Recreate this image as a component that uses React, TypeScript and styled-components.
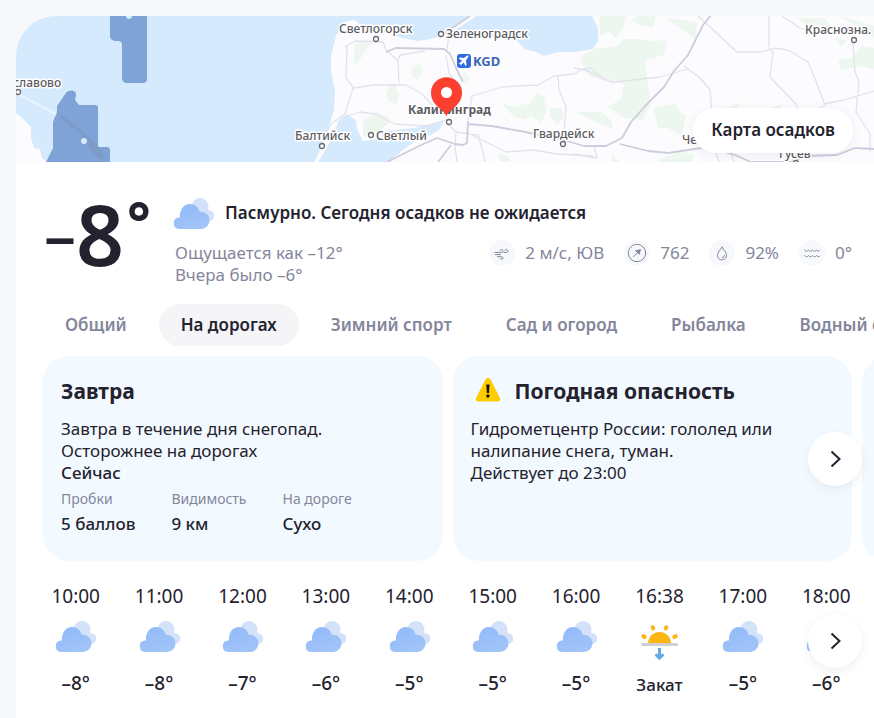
import React from "react";
import styled, { createGlobalStyle, css } from "styled-components";

const GlobalStyle = createGlobalStyle`
  * { box-sizing: border-box; }
  body {
    margin: 0;
    background: #f7f8fb;
    color: #25222f;
    font-family: "Noto Sans", "Open Sans", sans-serif;
    font-size: 17px;
    line-height: 22px;
    overflow-x: hidden;
  }
  h2, p, dl, dt, dd, ul, ol { margin: 0; padding: 0; list-style: none; }
  button { font: inherit; color: inherit; border: 0; cursor: pointer; }
`;

const Page = styled.div`
  display: flex;
  flex-direction: column;
  min-height: 100vh;
  padding: 16px 0 0 16px;
`;

const Card = styled.main`
  flex: 1;
  background: #fff;
  border-radius: 40px 0 0 0;
  overflow: hidden;
`;

const MapArea = styled.section`
  position: relative;
  height: 146px;
  background: #d5eafd;
`;

const MapDrawing = styled.svg`
  display: block;
  width: 100%;
  height: 100%;
  font-size: 12px;
  font-weight: 500;
`;

const MapButton = styled.button`
  position: absolute;
  right: 21px;
  bottom: 9px;
  padding: 11px 18px 12px;
  border-radius: 24px;
  background: #fff;
  font-weight: 600;
  box-shadow: 0 2px 10px rgba(40, 50, 90, 0.08);
`;

const Header = styled.header`
  display: flex;
  padding: 31px 22px 0 28px;
`;

const Temperature = styled.div`
  display: flex;
  align-items: center;
  flex: none;
  width: 129px;
  height: 82px;
  font-size: 84px;
  line-height: 82px;
  font-weight: 600;
`;

const Minus = styled.span`
  font-size: 64px;
  font-weight: 500;
`;

const Degree = styled.span`
  align-self: flex-start;
  margin-left: 3px;
  font-size: 56px;
  line-height: 56px;
  font-weight: 700;
`;

const Summary = styled.div`
  flex: 1;
  min-width: 0;
`;

const Condition = styled.div`
  display: flex;
  align-items: center;
  gap: 11px;
  height: 40px;
  font-weight: 600;
`;

const Details = styled.div`
  display: flex;
  justify-content: space-between;
  align-items: flex-start;
  margin-top: 7px;
  color: #84869c;
`;

const Feels = styled.p`
  padding: 2px 0 0 2px;
`;

const Metrics = styled.ul`
  display: flex;
  gap: 20px;
`;

const Metric = styled.li`
  display: flex;
  align-items: center;
  gap: 10px;
  height: 26px;
`;

const MetricIcon = styled.svg`
  width: 26px;
  height: 26px;
  border-radius: 50%;
  background: #f7f8fb;
  fill: none;
  stroke: #84869c;
  stroke-linecap: round;
  stroke-linejoin: round;
`;

const Tabs = styled.nav`
  display: flex;
  gap: 10px;
  margin-top: 18px;
  padding-left: 27px;
  overflow: hidden;
`;

const Tab = styled.button<{ $active?: boolean }>`
  flex: none;
  padding: 10px 22px;
  border-radius: 21px;
  background: transparent;
  color: #84869c;
  font-weight: 600;
  white-space: nowrap;
  ${(p) =>
    p.$active &&
    css`
      background: #f5f5f8;
      color: #25222f;
    `}
`;

const Carousel = styled.section`
  position: relative;
`;

const CardTrack = styled.div`
  display: flex;
  gap: 10px;
  margin-top: 10px;
  padding-left: 27px;
  overflow: hidden;
`;

const InfoCard = styled.article`
  flex: 0 0 calc(50% - 16px);
  min-height: 205px;
  padding: 21px 18px;
  border-radius: 26px;
  background: #f3faff;
`;

const CardTitle = styled.h2`
  display: flex;
  align-items: center;
  gap: 14px;
  margin-bottom: 13px;
  font-size: 21px;
  line-height: 28px;
  font-weight: 700;
`;

const WarningSlot = styled.svg`
  width: 26px;
  height: 28px;
  margin-left: 4px;
`;

const Now = styled.p`
  font-weight: 500;
`;

const Facts = styled.dl`
  display: flex;
  gap: 36px;
  margin-top: 5px;
`;

const FactName = styled.dt`
  color: #84869c;
  font-size: 14px;
  line-height: 20px;
`;

const FactValue = styled.dd`
  margin-top: 3px;
  line-height: 24px;
  font-weight: 500;
`;

const NextButton = styled.button`
  position: absolute;
  right: 12px;
  top: 50%;
  display: grid;
  place-items: center;
  width: 54px;
  height: 54px;
  margin-top: -27px;
  padding: 0;
  border-radius: 50%;
  background: #fff;
  box-shadow: 0 3px 10px rgba(40, 50, 90, 0.08);
`;

const Hours = styled.section`
  position: relative;
  margin-top: 20px;
  padding: 3px 6px 2px 18px;
`;

const HourList = styled.ol`
  display: grid;
  grid-template-columns: repeat(10, 1fr);
`;

const Hour = styled.li`
  display: flex;
  flex-direction: column;
  align-items: center;
  font-size: 19px;
  line-height: 24px;
`;

const HourIcon = styled.svg`
  width: 41px;
  height: 40px;
  margin: 12px 0 11px;
`;

const HourValue = styled.span<{ $event?: boolean }>`
  font-size: ${(p) => (p.$event ? 17 : 19)}px;
  line-height: ${(p) => (p.$event ? 28 : 24)}px;
  font-weight: 500;
`;

const CloudShape = () => (
  <>
    <g fill="#d3e2f8">
      <circle cx="27" cy="8.5" r="8.5" />
      <circle cx="36" cy="17.5" r="5.3" />
      <path d="M20 10h15l3 12-10 2z" />
    </g>
    <path
      d="M6 31a5.8 5.8 0 0 1-.3-11.5h1.2C6.5 12 10.500 6 17 6c4.800 0 8.800 3.200 9.700 7.900C32.300 13.500 36.500 17.200 36.500 22.300c0 5-4 8.700-8.900 8.700Z"
      fill="url(#cloudFill)"
    />
  </>
);

const Cloud = () => (
  <svg width="41" height="31" viewBox="0 0 41 31" aria-hidden="true">
    <defs>
      <linearGradient id="cloudFill" x1="0" y1="0" x2="0.4" y2="1">
        <stop offset="0" stopColor="#91bafa" />
        <stop offset="1" stopColor="#a0c3f8" />
      </linearGradient>
    </defs>
    <CloudShape />
  </svg>
);

const CloudHour = () => (
  <HourIcon viewBox="0 -1 41 40" aria-hidden="true">
    <CloudShape />
  </HourIcon>
);

const SunsetHour = () => (
  <HourIcon viewBox="0 0 41 40" aria-hidden="true">
    <path d="M9 23.500a11.500 11.500 0 0 1 23 0z" fill="#fbb515" />
    <g stroke="#fbb515" strokeWidth="4" strokeLinecap="round">
      <path d="M13.700 7.200l.5 1.200M27.300 7.200l-.5 1.200M4.300 16.200l1.400.8M36.700 16.200l-1.400.8" />
    </g>
    <path d="M3.500 24.500h34" stroke="#cfcfd4" strokeWidth="3" strokeLinecap="round" />
    <path d="M20.500 28v8" stroke="#62aae6" strokeWidth="3" />
    <path d="M17.500 35.200l3 3 3-3" fill="none" stroke="#62aae6" strokeWidth="3" strokeLinecap="round" strokeLinejoin="round" />
  </HourIcon>
);

const Chevron = () => (
  <svg width="24" height="24" viewBox="0 0 24 24" fill="none" stroke="#25222f" strokeWidth="2" aria-hidden="true">
    <path d="M8.500 4.500l8 7.500-8 7.500" />
  </svg>
);

const Warning = () => (
  <WarningSlot viewBox="0 0 26 28" aria-hidden="true">
    <path d="M10.500 2.500c1.200-2 4-2 5.100 0l9.200 18.200c1 2-.3 3.800-2.500 3.800H3.700c-2.200 0-3.500-1.800-2.500-3.800z" fill="#fc0" />
    <path d="M11.300 7.500h3.200l-.5 8.500h-2.200z" fill="#111" />
    <circle cx="12.900" cy="19" r="1.700" fill="#111" />
  </WarningSlot>
);

type Place = { name: string; x: number; y: number; dot: [number, number]; bold?: boolean };

const places: Place[] = [
  { name: "славово", x: 13, y: 87, dot: [18, 92] },
  { name: "Светлогорск", x: 339, y: 33, dot: [376, 39] },
  { name: "Зеленоградск", x: 446, y: 38, dot: [441, 34] },
  { name: "Калининград", x: 408, y: 114, dot: [449, 122], bold: true },
  { name: "Балтийск", x: 295, y: 140, dot: [322, 146] },
  { name: "Светлый", x: 376, y: 140, dot: [371, 135] },
  { name: "Гвардейск", x: 533, y: 138, dot: [563, 144] },
  { name: "Краснозна.", x: 805, y: 34, dot: [854, 40] },
  { name: "Че", x: 682, y: 144, dot: [712, 140] },
  { name: "Гусев", x: 779, y: 158, dot: [796, 163] },
];

const RegionMap = () => (
  <MapDrawing viewBox="16 16 858 146" preserveAspectRatio="xMinYMin slice" role="img" aria-label="Карта">
    <path
      fill="#fcfcff"
      d="M874 16H592l6 12 0 14-6 7-16 3-18 0-14 4-8-4-12-3-9-11-15-3-22 4-12-4-8 0-4-4 22-15-8 0-14 11-10 4-8 7-18 3-16-3-14-5-20-3-14-10-9 2-9 14-5 20 0 14 4 22 -1 18-6 20-8 20-8 17-4 9H874zM16 113l6 5 9 9 0 11 3 10 6 1 2 9 5 4H16z"
    />
    <path fill="#d5eafd" d="M339 120l8-5 9 5 1 9 6 12 16-2 9-8 26-3 21-5 10-3-6 10-9 5-16 7-11 8-15 12H318l8-13 7-13z" />
    <path fill="none" stroke="#eaf4fe" strokeWidth="2" d="M20 95l36 19" />
    <g fill="#eef7ef">
      <path d="M355 44l8-4h10l-7 10-10 16-3-4zM411 70l8-8 4 8-5 10-6-4zM386 92l8-10 5 12-2 11-9-4zM363 120l12-8 12 4 4 6-14 10-14 4zM501 103l16 5 8 12-12-4zM513 107l17-4 6-10 8 4 3 15-6 10-10-6-8 4zM550 108h11l3 8-6 9-8-8zM464 72l6 6-4 6-5-5zM498 154l10 2 3 6h-10z" />
      <path d="M600 16h26l-3 12-7 10-7-6-9 4-1-12zM630 20l8-4h18l-3 11-14-2zM665 18l20 2 12 3-1 17-8-6-14-10zM580 57l16-9h10l14-3 2-6 18 0 12 2 15-1-2 14-12 5-8 1 2 20 4 24-9 16-17-2-18-11 14-8 3-14-17-8-16 1-6-7zM574 112l16 0 11 0 10 8 2 9-12-5zM653 108l22-4 5 8 6 4-4 20-14-8-10 0zM724 108l15-5v8zM770 108l12-4-4 8zM797 18h28l6 8-16 6zM840 16l34 10v12zM835 37l12 4-6 6zM838 60l14-2 10-12 12 2v22l-14-4-20 4zM658 160l22-8 14 2-2 8h-34zM612 154l8 8h-8z" />
    </g>
    <g fill="none" stroke="#e2e2ec" strokeWidth="1.300" strokeLinejoin="round">
      <path d="M345 47l10-6 28 1 3 8 12 11 1 22M347 45l-1 33 8 10 20-3 32 0 15 8 13 14M398 61l2-6 25-4M353 88l-8 26-14 10-9 18M340 118l20-6 15 2 20 10 32 2 22-7M446 55l3 18 11 15M468 120l4-24 30-9 36-2 16-9 20-2 8-5 9-1 10 9 14 5 45-5 28-8M558 76l1 14 7 17-3 37M456 132l22 3 5 17 2 10M446 122l10 10-1 14 2 16M466 132l40 20 27-2 24 4 36 2M449 34l-2 16" />
      <path d="M698 16l39 36 24 0 14-4 13 2 20 12 9 22 8 21-9 5M769 16l0 32 4 4-3 25 25 26 6 10M684 66l16 12 10 12 2 24M782 16l18 12 10 4M824 104l20-4 30-9M853 42l2 30 4 10-3 30 14 22 0 18M574 68l14 3 14 8 12 4M594 146l3 12-23-4M715 150l4 12M730 150l4 12" />
    </g>
    <g fill="none" stroke="#cccddd" strokeWidth="1.800" strokeLinejoin="round">
      <path d="M386 52l10-4 48 1 6 5 7 16 6 12M445 33l25-17M387 162l32-16 18-8 18 6 8 1 4-2 1-22M468 124l24 2 28 5 40 8 24 7h22l16-8 9-16 17-19 16-16 10-16 14-16 15-30 13-16M438 162l13-17M620 144l28 7 20 2 33-5 16 2 18 5 16 7h40l16-6 30-1 18-7 19 1" />
    </g>
    <g fill="#7fa3d6">
      <path d="M110 16h37v63a4 4 0 0 1-4 4h-17a5 5 0 0 1-4-5V45a4 4 0 0 0-3-4h-4a5 5 0 0 1-5-5z" />
      <path d="M46 162l7-14V122l4-10v-6l9-13c3-4 11-3 10 3l-1 4 4 5h17a3 3 0 0 1 2 3v39h9a3 3 0 0 1 3 3v12z" />
    </g>
    <path fill="#7c9bc6" d="M60 114l14 10 16 14 12 12 3 8-5 2-6-6-5-8-10-14-9-6-10-8z" />
    <circle cx="84" cy="141" r="3" fill="#d5eafd" />
    <path d="M126 16h6a3 3 0 0 1-6 0z" fill="#d5eafd" />
    <g fill="#fff" stroke="#6a6a70" strokeWidth="1.300">
      {places.map((p) => (
        <circle key={p.name} cx={p.dot[0]} cy={p.dot[1]} r="2.500" />
      ))}
    </g>
    <g fill="#5c5c62" stroke="#fff" strokeWidth="3" strokeLinejoin="round" paintOrder="stroke">
      {places.map((p) => (
        <text key={p.name} x={p.x} y={p.y} fontWeight={p.bold ? 700 : 500}>
          {p.name}
        </text>
      ))}
    </g>
    <rect x="457" y="54" width="14" height="14" rx="3" fill="#2e6be0" />
    <path
      d="M460 57.500l3.800.5 3.200-2.300c1-.5 1.800.3 1.300 1.300L466 60.200l.5 5-1.200.8-1.500-3.600-2.400 2-.2 1.600-1-1.800-1.900-1 1.700-.2 2-2.400-3.200-1.800z"
      fill="#fff"
    />
    <text x="473" y="66" fontSize="13" fontWeight="700" fill="#3d68b3">
      KGD
    </text>
    <path d="M446.500 117c-1-8-15.500-10-15.500-24.300a15.500 15.500 0 0 1 31 0C462 107 447.500 109 446.500 117z" fill="#fc4030" />
    <circle cx="446.500" cy="92.500" r="5.500" fill="#fff" />
  </MapDrawing>
);

const metrics = [
  {
    value: "2 м/с, ЮВ",
    icon: <path d="M6 12.500h6.500a1.500 1.500 0 1 0-1.500-2M6.500 14.600h5M15 12.500h2.500a1.500 1.500 0 1 0-1.500-2M8.500 16.700h4.200a1.300 1.300 0 1 1-1.200 1.800" />,
  },
  {
    value: "762",
    icon: (
      <>
        <circle cx="13" cy="13" r="8.700" />
        <path d="M9.500 16.700l4-4" />
        <path d="M17 9l-1.500 6-4.500-4.500z" fill="#84869c" stroke="none" />
      </>
    ),
  },
  { value: "92%", icon: <path d="M13 7.200c2 2.900 4.500 5.600 4.500 8.200a4.500 4.500 0 0 1-9 0C8.500 12.800 11 10.100 13 7.200zM15.500 15.500a2.500 2.500 0 0 1-2 2.200" /> },
  {
    value: "0°",
    icon: (
      <path d="M5.500 10c1.300 1.700 3 1.700 4 0 1.300 1.700 3 1.700 4 0 1.300 1.700 3 1.700 4 0 1 1.200 2 1.500 3 .8M5.500 15.500c1.300 1.700 3 1.700 4 0 1.300 1.700 3 1.700 4 0 1.300 1.700 3 1.700 4 0 1 1.200 2 1.500 3 .8" />
    ),
  },
];

const tabs = ["Общий", "На дорогах", "Зимний спорт", "Сад и огород", "Рыбалка", "Водный спорт"];

const facts = [
  ["Пробки", "5 баллов"],
  ["Видимость", "9 км"],
  ["На дороге", "Сухо"],
];

const hours = [
  ["10:00", "–8°"],
  ["11:00", "–8°"],
  ["12:00", "–7°"],
  ["13:00", "–6°"],
  ["14:00", "–5°"],
  ["15:00", "–5°"],
  ["16:00", "–5°"],
  ["16:38", "Закат"],
  ["17:00", "–5°"],
  ["18:00", "–6°"],
];

export default function App() {
  return (
    <Page>
      <GlobalStyle />
      <Card>
        <MapArea>
          <RegionMap />
          <MapButton>Карта осадков</MapButton>
        </MapArea>
        <Header>
          <Temperature>
            <Minus>–</Minus>
            <span>8</span>
            <Degree>°</Degree>
          </Temperature>
          <Summary>
            <Condition>
              <Cloud />
              <span>Пасмурно. Сегодня осадков не ожидается</span>
            </Condition>
            <Details>
              <Feels>
                Ощущается как –12°
                <br />
                Вчера было –6°
              </Feels>
              <Metrics>
                {metrics.map((m) => (
                  <Metric key={m.value}>
                    <MetricIcon viewBox="0 0 26 26" aria-hidden="true">
                      {m.icon}
                    </MetricIcon>
                    <span>{m.value}</span>
                  </Metric>
                ))}
              </Metrics>
            </Details>
          </Summary>
        </Header>
        <Tabs>
          {tabs.map((t) => (
            <Tab key={t} $active={t === "На дорогах"}>
              {t}
            </Tab>
          ))}
        </Tabs>
        <Carousel>
          <CardTrack>
            <InfoCard>
              <CardTitle>Завтра</CardTitle>
              <p>
                Завтра в течение дня снегопад.
                <br />
                Осторожнее на дорогах
              </p>
              <Now>Сейчас</Now>
              <Facts>
                {facts.map(([name, value]) => (
                  <div key={name}>
                    <FactName>{name}</FactName>
                    <FactValue>{value}</FactValue>
                  </div>
                ))}
              </Facts>
            </InfoCard>
            <InfoCard>
              <CardTitle>
                <Warning />
                Погодная опасность
              </CardTitle>
              <p>
                Гидрометцентр России: гололед или
                <br />
                налипание снега, туман.
                <br />
                Действует до 23:00
              </p>
            </InfoCard>
            <InfoCard />
          </CardTrack>
          <NextButton aria-label="Следующая карточка">
            <Chevron />
          </NextButton>
        </Carousel>
        <Hours>
          <HourList>
            {hours.map(([time, value]) => (
              <Hour key={time}>
                <time>{time}</time>
                {value === "Закат" ? <SunsetHour /> : <CloudHour />}
                <HourValue $event={value === "Закат"}>{value}</HourValue>
              </Hour>
            ))}
          </HourList>
          <NextButton aria-label="Следующие часы">
            <Chevron />
          </NextButton>
        </Hours>
      </Card>
    </Page>
  );
}
